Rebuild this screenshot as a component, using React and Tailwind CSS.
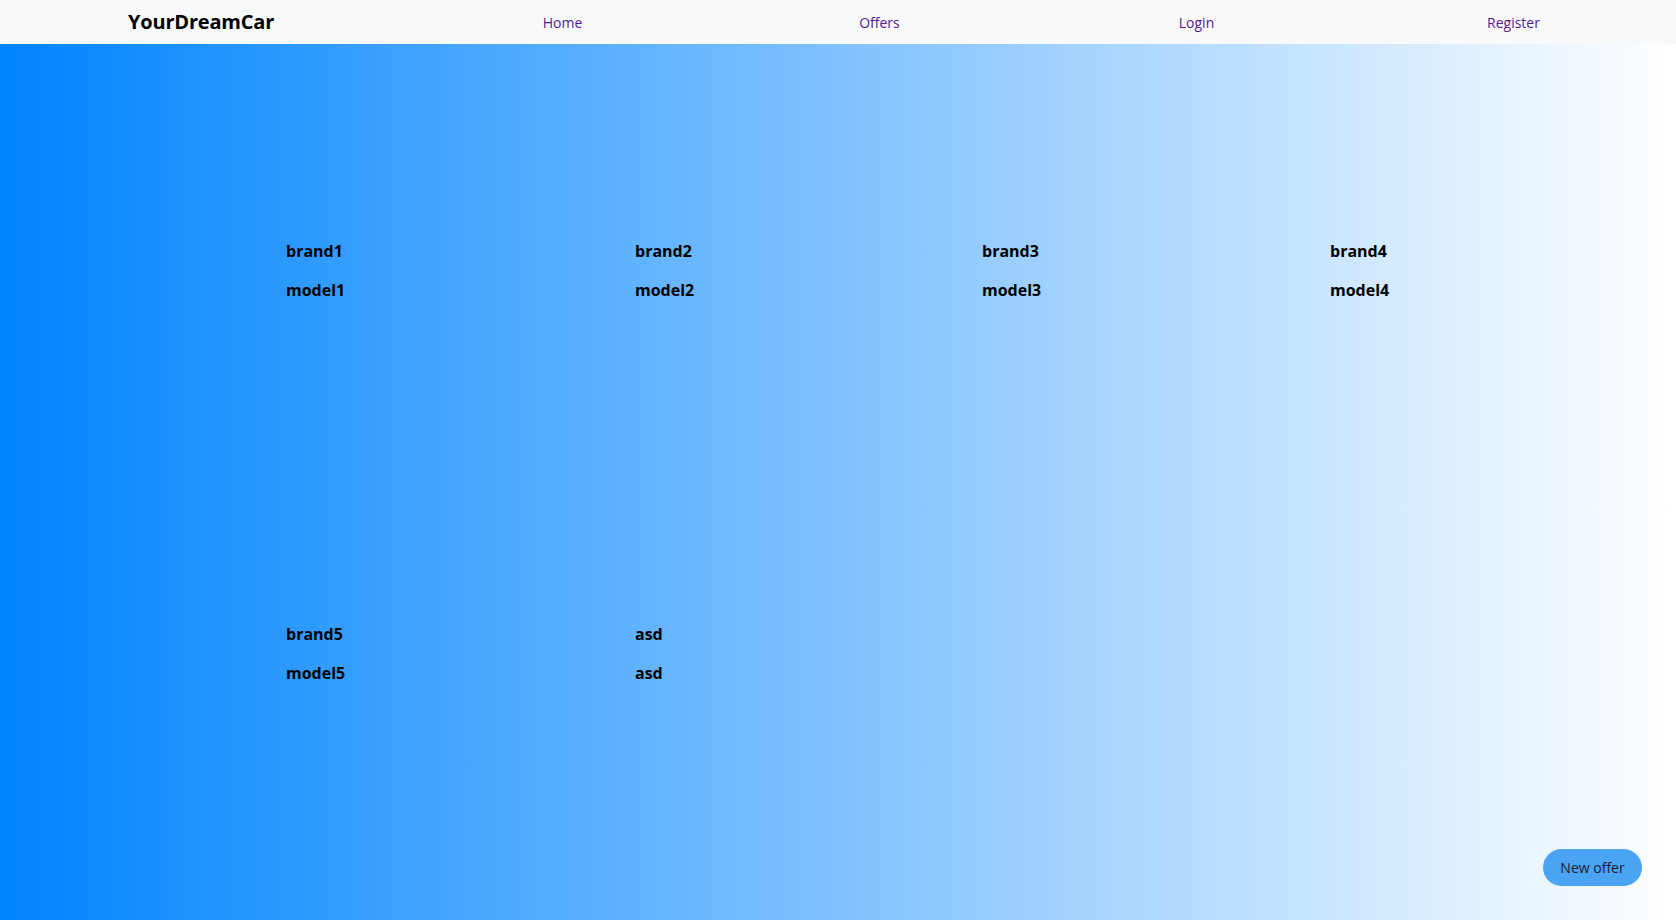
import React from "react";

const cars = [
  ["brand1", "model1"],
  ["brand2", "model2"],
  ["brand3", "model3"],
  ["brand4", "model4"],
  ["brand5", "model5"],
  ["asd", "asd"],
];

export default function App() {
  return (
    <div className="min-h-[920px] flex flex-col" style={{ fontFamily: '"Open Sans", "Noto Sans", sans-serif' }}>
      <nav className="h-[44px] bg-[#f8f9fa] flex items-center pl-[128px] pr-[4px]">
        <div className="w-[276px] text-[20px] font-bold text-black tracking-[-0.2px]">YourDreamCar</div>
        <div className="flex-1 grid grid-cols-4">
          {["Home", "Offers", "Login", "Register"].map((l) => (
            <a key={l} href="#" className="text-center text-[14px] text-[#551a8b]">
              {l}
            </a>
          ))}
        </div>
      </nav>
      <main className="flex-1 bg-[linear-gradient(to_right,#0084ff,#ffffff)] pt-[195px] pb-[200px]">
        <div className="ml-[286px] grid grid-cols-[349px_347px_348px_1fr] gap-y-[320px]">
          {cars.map(([b, m], i) => (
            <div key={i} className="flex flex-col gap-[15px] text-[16px] font-bold text-black leading-[24px]">
              <div>{b}</div>
              <div>{m}</div>
            </div>
          ))}
        </div>
      </main>
      <button className="fixed right-[34px] bottom-[34px] w-[99px] h-[37px] rounded-full bg-[#4ba3f3] text-[14px] text-[#1b1b2b]">
        New offer
      </button>
    </div>
  );
}
